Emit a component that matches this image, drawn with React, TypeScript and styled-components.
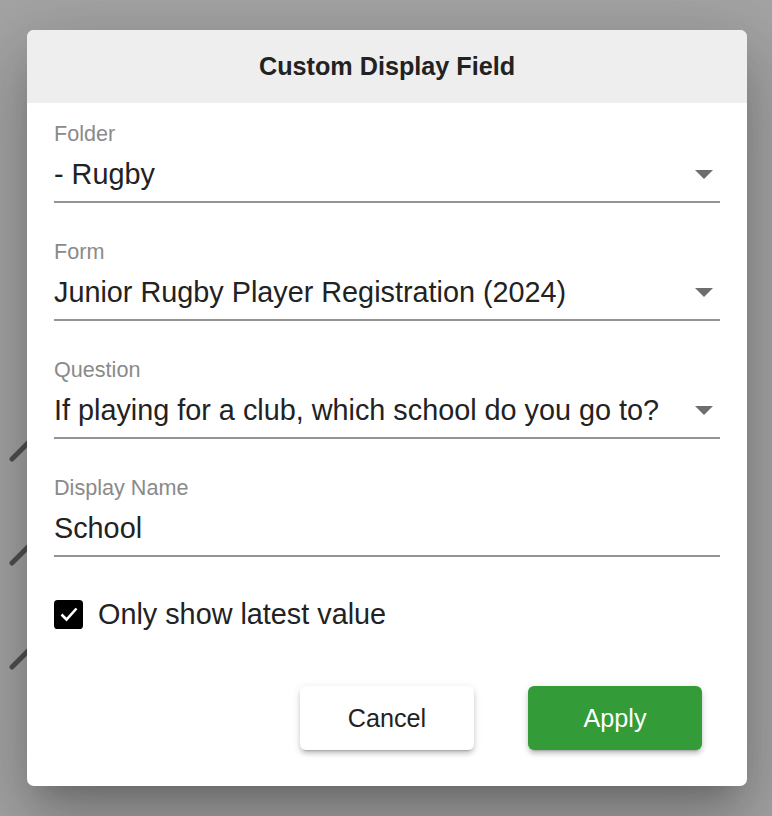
import React from "react";
import styled, { createGlobalStyle } from "styled-components";

const Global = createGlobalStyle`
  html, body { margin: 0; padding: 0; }
  body { font-family: "Liberation Sans", Arial, sans-serif; background: #a4a4a4; }
  * { box-sizing: border-box; }
`;

const Page = styled.div`
  position: relative;
  width: 772px;
  height: 816px;
  overflow: hidden;
  background: #a4a4a4;
`;

const BehindList = styled.div`
  display: flex;
  flex-direction: column;
  gap: 74px;
  padding: 436px 0 0 8px;
`;

const PencilIcon = styled.svg`
  display: block;
  width: 30px;
  height: 30px;
`;

const Backdrop = styled.div`
  position: absolute;
  inset: 0;
  display: flex;
  align-items: center;
  justify-content: center;
  padding-left: 2px;
`;

const Dialog = styled.div`
  width: 720px;
  background: #fff;
  border-radius: 7px;
  overflow: hidden;
  box-shadow: 0 20px 27px -13px rgba(0, 0, 0, 0.2), 0 43px 68px 5px rgba(0, 0, 0, 0.14),
    0 16px 83px 14px rgba(0, 0, 0, 0.12);
`;

const Header = styled.div`
  height: 73.5px;
  background: #eeeeee;
  display: flex;
  align-items: center;
  justify-content: center;
  font-size: 25.2px;
  font-weight: 700;
  color: #222;
`;

const Content = styled.div`
  padding: 18.5px 27px 0;
  display: flex;
  flex-direction: column;
  gap: 37px;
`;

const Field = styled.div`
  display: flex;
  flex-direction: column;
`;

const Label = styled.div`
  font-size: 21.6px;
  line-height: 24px;
  color: #8a8a8a;
`;

const InputRow = styled.div`
  margin-top: 10.5px;
  display: flex;
  align-items: center;
  padding-bottom: 8.5px;
  border-bottom: 2px solid #949494;
`;

const Value = styled.div`
  flex: 1;
  font-size: 28.8px;
  line-height: 36px;
  color: #222;
  white-space: nowrap;
`;

const Arrow = styled.svg`
  width: 18px;
  height: 9px;
  margin-right: 7px;
  flex: none;
`;

const CheckRow = styled.div`
  margin-top: 6px;
  display: flex;
  align-items: center;
  gap: 15px;
`;

const Box = styled.div`
  width: 29px;
  height: 29px;
  background: #000;
  border-radius: 3.6px;
  display: flex;
  align-items: center;
  justify-content: center;
`;

const CheckLabel = styled.div`
  font-size: 28.8px;
  line-height: 29px;
  color: #222;
`;

const Footer = styled.div`
  display: flex;
  justify-content: flex-end;
  gap: 54px;
  padding: 57px 45px 36px 27px;
`;

const Button = styled.button<{ $primary?: boolean }>`
  width: 174px;
  height: 64.5px;
  border: none;
  border-radius: 6px;
  font-family: "Liberation Sans", Arial, sans-serif;
  font-size: 25.2px;
  color: ${(p) => (p.$primary ? "#fff" : "#222")};
  background: ${(p) => (p.$primary ? "#339b37" : "#fff")};
  box-shadow: 0 5px 2px -4px rgba(0, 0, 0, 0.2), 0 4px 4px 0 rgba(0, 0, 0, 0.14),
    0 2px 9px 0 rgba(0, 0, 0, 0.12);
  cursor: pointer;
`;

const Pencil = () => (
  <PencilIcon viewBox="0 0 30 30">
    <line x1="4" y1="23" x2="30" y2="-3" stroke="#505050" strokeWidth="5" strokeLinecap="round" />
  </PencilIcon>
);

const fields = [
  { label: "Folder", value: "- Rugby", select: true },
  { label: "Form", value: "Junior Rugby Player Registration (2024)", select: true },
  { label: "Question", value: "If playing for a club, which school do you go to?", select: true },
  { label: "Display Name", value: "School", select: false },
];

export default function App() {
  return (
    <Page>
      <Global />
      <BehindList>
        <Pencil />
        <Pencil />
        <Pencil />
      </BehindList>
      <Backdrop>
        <Dialog>
          <Header>Custom Display Field</Header>
          <Content>
            {fields.map((f) => (
              <Field key={f.label}>
                <Label>{f.label}</Label>
                <InputRow>
                  <Value>{f.value}</Value>
                  {f.select && (
                    <Arrow viewBox="0 0 18 9">
                      <path d="M0 0 L18 0 L9 9 Z" fill="#6e6e6e" />
                    </Arrow>
                  )}
                </InputRow>
              </Field>
            ))}
            <CheckRow>
              <Box>
                <svg width="20" height="16" viewBox="0 0 20 16">
                  <path d="M2.5 8.5 L7.5 13.5 L17.5 2.5" fill="none" stroke="#fff" strokeWidth="2.6" />
                </svg>
              </Box>
              <CheckLabel>Only show latest value</CheckLabel>
            </CheckRow>
          </Content>
          <Footer>
            <Button>Cancel</Button>
            <Button $primary>Apply</Button>
          </Footer>
        </Dialog>
      </Backdrop>
    </Page>
  );
}
